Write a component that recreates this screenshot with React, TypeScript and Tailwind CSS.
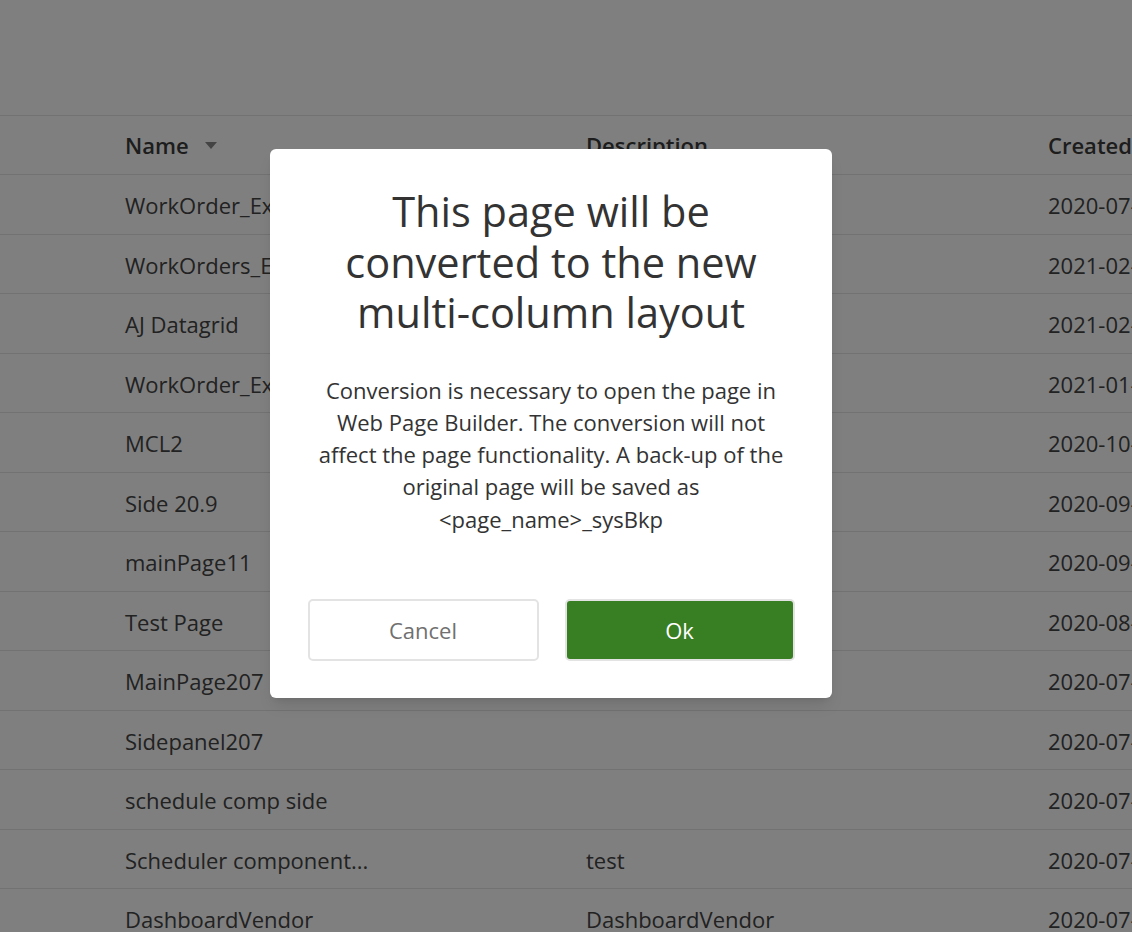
import React from 'react';

const rows = [
  { name: 'WorkOrder_Example', desc: '', created: '2020-07-21' },
  { name: 'WorkOrders_Example', desc: '', created: '2021-02-03' },
  { name: 'AJ Datagrid', desc: '', created: '2021-02-01' },
  { name: 'WorkOrder_Example2', desc: '', created: '2021-01-12' },
  { name: 'MCL2', desc: '', created: '2020-10-14' },
  { name: 'Side 20.9', desc: '', created: '2020-09-20' },
  { name: 'mainPage11', desc: '', created: '2020-09-11' },
  { name: 'Test Page', desc: '', created: '2020-08-19' },
  { name: 'MainPage207', desc: '', created: '2020-07-20' },
  { name: 'Sidepanel207', desc: '', created: '2020-07-20' },
  { name: 'schedule comp side', desc: '', created: '2020-07-16' },
  { name: 'Scheduler component...', desc: 'test', created: '2020-07-16' },
  { name: 'DashboardVendor', desc: 'DashboardVendor', created: '2020-07-15' },
];

export default function App() {
  return (
    <div
      className="relative w-[1132px] h-[932px] overflow-hidden bg-white"
      style={{ fontFamily: '"Open Sans", "Noto Sans", sans-serif' }}
    >
      {/* page behind the dialog */}
      <div className="pt-[115px]">
        <div className="flex items-center h-[60px] border-y border-[#e4e4e4] text-[22px] font-semibold text-[#3a3a3a]">
          <div className="w-[586px] shrink-0 pl-[125px] flex items-center gap-4">
            <span>Name</span>
            <svg width="12" height="8" viewBox="0 0 12 8" className="mt-[2px]">
              <path d="M0 0h12L6 7z" fill="#888" />
            </svg>
          </div>
          <div className="w-[462px] shrink-0">Description</div>
          <div className="shrink-0 whitespace-nowrap">Created</div>
        </div>
        {rows.map((r) => (
          <div
            key={r.name}
            className="flex items-center h-[59.5px] pt-[3px] border-b border-[#e4e4e4] text-[22px] text-[#444]"
          >
            <div className="w-[586px] shrink-0 pl-[125px] whitespace-nowrap">{r.name}</div>
            <div className="w-[462px] shrink-0 whitespace-nowrap">{r.desc}</div>
            <div className="shrink-0 whitespace-nowrap">{r.created}</div>
          </div>
        ))}
      </div>

      {/* overlay */}
      <div className="absolute inset-0 bg-black/50" />

      {/* dialog */}
      <div className="absolute left-[270px] top-[149px] w-[562px] h-[549px] bg-white rounded-md shadow-lg flex flex-col items-center">
        <h1 className="mt-[37px] w-[480px] text-center text-[41.5px] leading-[50.5px] text-[#333] font-normal">
          This page will be converted to the new multi-column layout
        </h1>
        <p className="mt-[36px] w-[484px] text-center text-[22px] leading-[32.3px] text-[#333]">
          Conversion is necessary to open the page in Web Page Builder. The conversion will not affect the page
          functionality. A back-up of the original page will be saved as &lt;page_name&gt;_sysBkp
        </p>
        <div className="mt-auto mb-[37px] flex gap-[26px]">
          <button className="w-[231px] h-[62px] pt-[1px] rounded-[5px] border-2 border-[#e3e3e3] bg-white text-[22px] text-[#707070]">
            Cancel
          </button>
          <button className="w-[230px] h-[62px] pt-[1px] rounded-[5px] border-2 border-[#e3e3e3] bg-[#387e23] text-[22px] text-white">
            Ok
          </button>
        </div>
      </div>
    </div>
  );
}
